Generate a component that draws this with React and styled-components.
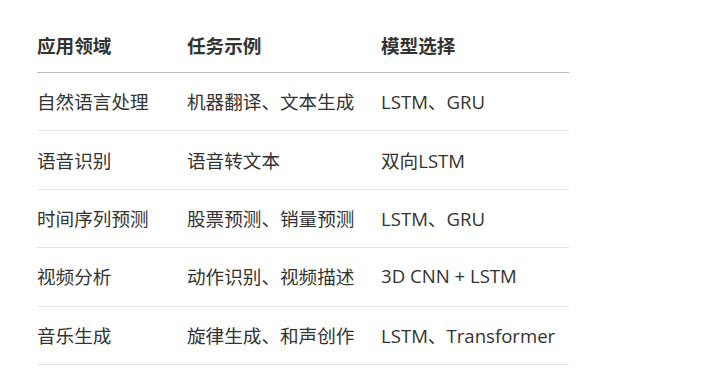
import React from "react";
import styled, { createGlobalStyle } from "styled-components";

const Global = createGlobalStyle`
  html, body { margin: 0; padding: 0; background: #ffffff; }
  body { font-family: "Open Sans", "Noto Sans CJK SC", sans-serif; color: #333333; }
`;

const Page = styled.div`
  padding: 18px 0 0 37px;
`;

const Table = styled.table`
  border-collapse: collapse;
  width: 532px;
  table-layout: fixed;
  font-family: "Open Sans", "Noto Sans CJK SC", sans-serif;
  font-size: 18.6px;
  color: #333333;
`;

const Th = styled.th`
  text-align: left;
  font-weight: 700;
  height: 52px;
  padding: 0 0 2px 0;
  border-bottom: 1px solid #bdbdbd;
  width: ${(p) => p.$w}px;
  vertical-align: middle;
`;

const Td = styled.td`
  height: 55.4px;
  padding: 0 0 2px 0;
  border-bottom: 1px solid #e3e3e3;
  vertical-align: middle;
  white-space: nowrap;
`;

const cols = [
  { label: "应用领域", w: 150 },
  { label: "任务示例", w: 194 },
  { label: "模型选择", w: 188 },
];

const rows = [
  ["自然语言处理", "机器翻译、文本生成", "LSTM、GRU"],
  ["语音识别", "语音转文本", "双向LSTM"],
  ["时间序列预测", "股票预测、销量预测", "LSTM、GRU"],
  ["视频分析", "动作识别、视频描述", "3D CNN + LSTM"],
  ["音乐生成", "旋律生成、和声创作", "LSTM、Transformer"],
];

export default function App() {
  return (
    <Page>
      <Global />
      <Table>
        <thead>
          <tr>
            {cols.map((c) => (
              <Th key={c.label} $w={c.w}>{c.label}</Th>
            ))}
          </tr>
        </thead>
        <tbody>
          {rows.map((r, i) => (
            <tr key={i}>
              {r.map((cell, j) => (
                <Td key={j}>{cell}</Td>
              ))}
            </tr>
          ))}
        </tbody>
      </Table>
    </Page>
  );
}
